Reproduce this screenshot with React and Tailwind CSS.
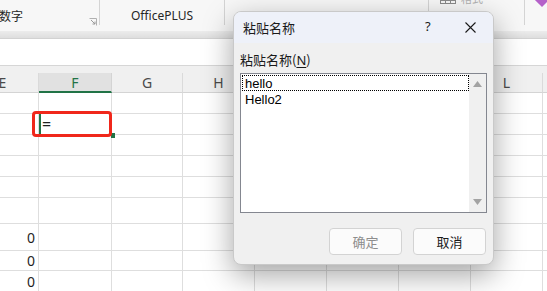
import React from "react";

const cols = [
  { n: "E", w: 72 },
  { n: "F", w: 73, sel: true },
  { n: "G", w: 71 },
  { n: "H", w: 72 },
  { n: "I", w: 72 },
  { n: "J", w: 72 },
  { n: "K", w: 72 },
  { n: "L", w: 72 },
  { n: "", w: 72 },
];
const rows = [
  { h: 21 },
  { h: 21 },
  { h: 21 },
  { h: 21 },
  { h: 21 },
  { h: 26 },
  { h: 27, v: "0" },
  { h: 20, v: "0" },
  { h: 21, v: "0" },
];

export default function App() {
  return (
    <div className="relative w-[547px] h-[291px] overflow-hidden bg-white font-['Noto_Sans','Noto_Sans_CJK_SC',sans-serif] text-[#262626]">
      {/* Ribbon */}
      <div className="flex h-[31px] bg-[#f7f7f7] text-[12px]">
        <div className="relative flex w-[100px] items-center pl-0 pt-[7px] border-r border-[#d4d4d4] h-[25px]">
          <span className="ml-[-1px] font-['Noto_Sans_CJK_SC',sans-serif]">数字</span>
          <svg className="absolute left-[89px] top-[18px]" width="8" height="8" viewBox="0 0 8 8">
            <path d="M0.5 0.5h7v7" fill="none" stroke="#b0b0b0" />
            <path d="M2 2l4 4M6 3.5V6H3.5" fill="none" stroke="#9a9a9a" />
          </svg>
        </div>
        <div className="flex w-[125px] h-[25px] items-center justify-center pt-[7px] border-r border-[#d4d4d4]">
          <span>OfficePLUS</span>
        </div>
        <div className="w-[203px]" />
        <div className="relative w-[97px] h-[25px] overflow-hidden border-l border-r border-[#d4d4d4]">
          <svg className="absolute left-[11px] top-[-4px]" width="16" height="8" viewBox="0 0 16 8">
            <rect x="0.5" y="0.5" width="15" height="7" fill="none" stroke="#8a8a8a" />
            <path d="M0.5 4.5h15M5.5 0v8M10.5 0v8" stroke="#8a8a8a" />
          </svg>
          <span className="absolute left-[32px] top-[-9px] text-[11px] text-[#b0b0b0]">格式</span>
        </div>
        <div className="relative flex-1">
          <div className="absolute left-[12px] top-[-5px] h-[10px] w-[10px] rotate-45 bg-[#b561c9]" />
        </div>
      </div>
      <div className="h-[8px] bg-gradient-to-b from-[#ececec] to-[#dedede] border-b border-[#d2d2d2]" />
      {/* Formula bar */}
      <div className="h-[27px] bg-white border-b border-[#d6d6d6]" />
      {/* Gap band */}
      <div className="h-[7px] bg-[#f0f0f0]" />
      {/* Column headers */}
      <div className="ml-[-33px] flex h-[20px] bg-[#f0f0f0]">
        {cols.map((c, k) => (
          <div
            key={k}
            style={{ width: c.w }}
            className={
              "shrink-0 flex items-center justify-center text-[14px] border-r " +
              (c.sel
                ? "bg-[#e1e1e1] text-[#217346] border-[#d4d4d4] border-b-2 border-b-[#217346]"
                : "text-[#4a4a4a] border-[#dadada] border-b border-b-[#d4d4d4]")
            }
          >
            {c.n}
          </div>
        ))}
      </div>
      {/* Grid */}
      <div className="ml-[-33px]">
        {rows.map((r, i) => (
          <div key={i} className="flex" style={{ height: r.h }}>
            {cols.map((c, j) => (
              <div
                key={j}
                style={{ width: c.w }}
                className="shrink-0 border-r border-b border-[#dedede] flex items-center justify-end pr-[3px] text-[14px] text-[#1f1f1f]"
              >
                {j === 0 && r.v ? r.v : null}
                {j === 1 && i === 1 ? <span className="mr-auto pl-[3px] text-[16px] leading-none">=</span> : null}
              </div>
            ))}
          </div>
        ))}
      </div>

      {/* Selection markers */}
      <div className="absolute left-[39px] top-[113px] h-[24px] w-[2px] bg-[#217346]" />
      <div className="absolute left-[111px] top-[133px] h-[5px] w-[4px] bg-[#217346]" />
      {/* Red annotation box */}
      <div className="absolute left-[32px] top-[111px] h-[26px] w-[80px] rounded-[4px] border-[3px] border-[#f0271b]" />

      {/* Dialog */}
      <div className="absolute left-[233px] top-[11px] w-[261px] h-[254px] rounded-[8px] bg-[#f0f0f0] border border-[#c9c9c9] shadow-[0_10px_30px_rgba(0,0,0,0.36)] overflow-hidden font-['Noto_Sans_CJK_SC',sans-serif]">
        <div className="relative flex h-[31px] items-center bg-[#eef1f9] pl-[9px] text-[13px] text-[#1a1a1a]">
          <span>粘贴名称</span>
          <span className="absolute left-[191px] top-[5px] font-['Noto_Sans',sans-serif] text-[13px]">?</span>
          <svg className="absolute left-[231px] top-[10px]" width="11" height="11" viewBox="0 0 11 11">
            <path d="M0.5 0.5l10 10M10.5 0.5l-10 10" stroke="#1a1a1a" strokeWidth="1.1" />
          </svg>
        </div>
        <div className="px-[6px] pt-[8px] text-[13px] leading-[18px] text-[#1a1a1a]">
          粘贴名称(<span className="underline underline-offset-2 font-['Noto_Sans',sans-serif]">N</span>)
        </div>
        <div className="mx-[6px] mt-[4px] flex h-[140px] w-[247px] border border-[#848790] bg-white">
          <div className="flex-1 pt-[1px] pl-[1px] font-['Liberation_Sans',sans-serif] text-[13px] text-black">
            <div className="h-[16px] leading-[15px] border border-dotted border-black pl-[2px]">hello</div>
            <div className="h-[16px] leading-[17px] pl-[3px]">Hello2</div>
          </div>
          <div className="flex w-[17px] flex-col items-center justify-between bg-[#f0f0f0] py-[7px]">
            <svg width="9" height="6" viewBox="0 0 9 6"><path d="M4.5 0L9 6H0z" fill="#a3a3a3" /></svg>
            <svg width="9" height="6" viewBox="0 0 9 6"><path d="M0 0h9L4.5 6z" fill="#a3a3a3" /></svg>
          </div>
        </div>
        <div className="mt-[15px] flex justify-end gap-[11px] pr-[7px] text-[13px]">
          <div className="flex h-[27px] w-[73px] items-center justify-center rounded-[4px] border border-[#d3d3d3] bg-[#fbfbfb] text-[#8d8d8d]">确定</div>
          <div className="flex h-[27px] w-[73px] items-center justify-center rounded-[4px] border border-[#d3d3d3] bg-[#fbfbfb] text-[#1a1a1a]">取消</div>
        </div>
      </div>
    </div>
  );
}
